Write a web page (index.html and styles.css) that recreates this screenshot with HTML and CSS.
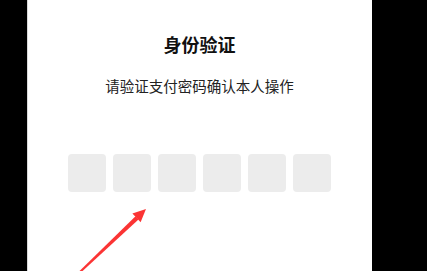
FILE: index.html
```html
<!DOCTYPE html>
<html lang="zh-CN">
<head>
<meta charset="utf-8">
<link rel="stylesheet" href="styles.css">
</head>
<body>
<div class="screen">
  <div class="panel">
    <h1 class="title">身份验证</h1>
    <p class="subtitle">请验证支付密码确认本人操作</p>
    <div class="pin">
      <div class="cell"></div>
      <div class="cell"></div>
      <div class="cell"></div>
      <div class="cell"></div>
      <div class="cell"></div>
      <div class="cell"></div>
    </div>
  </div>
  <svg class="arrow" width="427" height="271" viewBox="0 0 427 271">
    <polygon points="78.5,272 81.5,272 138.5,219.5 135.5,216.3" fill="#fb3434"/>
    <polygon points="146,209 132.4,213.5 140.6,222.3" fill="#fb3434"/>
  </svg>
</div>
</body>
</html>
```

FILE: styles.css
```css
html, body {
  margin: 0;
  padding: 0;
  background: #000;
}
.screen {
  position: relative;
  width: 427px;
  height: 271px;
  overflow: hidden;
  background: #000;
  font-family: "Noto Sans CJK SC", "Noto Sans", sans-serif;
}
.panel {
  margin-left: 27px;
  width: 345px;
  height: 271px;
  background: #fff;
  box-sizing: border-box;
  padding-top: 32px;
  display: flex;
  flex-direction: column;
  align-items: center;
  box-shadow: inset 1px 0 0 #d8d8d8;
}
.title {
  margin: 0;
  font-size: 18px;
  line-height: 24px;
  font-weight: 700;
  color: #111;
}
.subtitle {
  margin: 20px 0 0;
  font-size: 14.5px;
  line-height: 20px;
  color: #222;
}
.pin {
  margin-top: 58px;
  display: flex;
  gap: 7px;
}
.cell {
  width: 38px;
  height: 38px;
  border-radius: 4px;
  background: #ececec;
}
.arrow {
  position: absolute;
  left: 0;
  top: 0;
}
```
